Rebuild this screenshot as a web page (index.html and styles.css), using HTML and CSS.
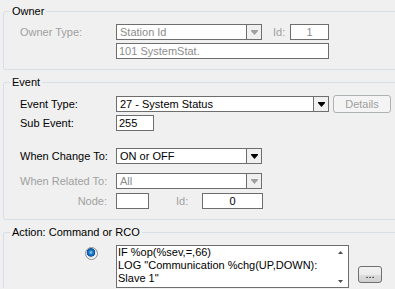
FILE: index.html
```html
<!DOCTYPE html>
<html lang="en">

<head>
   <meta charset="UTF-8">
   <meta name="viewport" content="width=device-width, initial-scale=1.0">
   <title>Event Action</title>
   <link rel="stylesheet" href="styles.css">
</head>

<body>

   <fieldset class="group">
       <legend>Owner</legend>
       <div class="row">
           <span class="label disabled">Owner Type:</span>
           <div class="combo combo-short is-disabled">
               <span class="combo-text">Station Id</span>
               <span class="combo-btn"><svg width="7" height="5" viewBox="0 0 7 5"><path d="M0 0h7v1H0zM0 1h7L3.5 5z"/></svg></span>
           </div>
           <span class="id-label disabled">Id:</span>
           <div class="field field-id is-disabled">1</div>
       </div>
       <div class="row gap-3">
           <span class="label"></span>
           <div class="field field-wide is-disabled">101 SystemStat.</div>
       </div>
   </fieldset>

   <fieldset class="group">
       <legend>Event</legend>
       <div class="row row-tall">
           <span class="label">Event Type:</span>
           <div class="combo combo-wide">
               <span class="combo-text">27 - System Status</span>
               <span class="combo-btn"><svg width="7" height="5" viewBox="0 0 7 5"><path d="M0 0h7v1H0zM0 1h7L3.5 5z"/></svg></span>
           </div>
           <button type="button" class="details-button" disabled>Details</button>
       </div>
       <div class="row gap-2">
           <span class="label">Sub Event:</span>
           <div class="field field-sub">255</div>
       </div>
       <div class="row gap-17">
           <span class="label">When Change To:</span>
           <div class="combo combo-short">
               <span class="combo-text">ON or OFF</span>
               <span class="combo-btn"><svg width="7" height="5" viewBox="0 0 7 5"><path d="M0 0h7v1H0zM0 1h7L3.5 5z"/></svg></span>
           </div>
       </div>
       <div class="row gap-9">
           <span class="label disabled">When Related To:</span>
           <div class="combo combo-short is-disabled">
               <span class="combo-text">All</span>
               <span class="combo-btn"><svg width="7" height="5" viewBox="0 0 7 5"><path d="M0 0h7v1H0zM0 1h7L3.5 5z"/></svg></span>
           </div>
       </div>
       <div class="row gap-4">
           <span class="label label-right disabled">Node:</span>
           <div class="field field-node"></div>
           <span class="node-id-label disabled">Id:</span>
           <div class="field field-node-id">0</div>
       </div>
   </fieldset>

   <fieldset class="group group-last">
       <legend>Action: Command or RCO</legend>
       <div class="action-row">
           <span class="radio-cell"><span class="radio"></span></span>
           <div class="script-box">
               <div class="script-text">IF %op(%sev,=,66)<br>LOG "Communication %chg(UP,DOWN):<br>Slave 1"</div>
               <div class="scroll">
                   <svg width="5" height="3" viewBox="0 0 5 3"><path d="M2.5 0L5 3H0z"/></svg>
                   <svg width="5" height="3" viewBox="0 0 5 3"><path d="M0 0h5L2.5 3z"/></svg>
               </div>
           </div>
           <button type="button" class="more-button">...</button>
       </div>
   </fieldset>

</body>

</html>
```

FILE: styles.css
```css
body {
    font-family: "Liberation Sans", Arial, sans-serif;
    font-size: 11px;
    margin: 0;
    background-color: #F0F0F0;
    color: #000;
    overflow: hidden;
    height: 289px;
}

.group {
    margin: 5px -12px 0 3px;
    padding: 6px 0 10px 6px;
    border: 1px solid #D5DFE5;
    border-radius: 3px;
    min-width: 0;
}

.group:first-child {
    margin-top: 4px;
}

/* runs off the bottom of the window */
.group-last {
    padding-bottom: 0;
    border-bottom: 0;
    border-radius: 3px 3px 0 0;
}

legend {
    padding: 0 2px;
    line-height: 14px;
    height: 14px;
}

.row {
    display: flex;
    align-items: center;
    height: 16px;
    padding-left: 10px;
}

.row-tall {
    height: 18px;
}

.gap-2 { margin-top: 2px; }
.gap-3 { margin-top: 3px; }
.gap-4 { margin-top: 4px; }
.gap-9 { margin-top: 9px; }
.gap-17 { margin-top: 17px; }

.label {
    width: 96px;
    flex-shrink: 0;
}

.label-right {
    text-align: right;
    padding-right: 9px;
    width: 87px;
}

.disabled {
    color: #A0A0A0;
}

.field,
.combo {
    box-sizing: border-box;
    height: 16px;
    border: 1px solid #6E6E6E;
    background-color: #fff;
    line-height: 14px;
    flex-shrink: 0;
}

.field {
    padding-left: 2px;
}

.is-disabled {
    color: #8C8C8C;
}

.combo {
    display: flex;
}

.combo-text {
    flex-grow: 1;
    padding-left: 3px;
}

.combo-btn {
    width: 14px;
    border-left: 1px solid #6E6E6E;
    background-color: #F0F0F0;
    display: flex;
    align-items: center;
    justify-content: center;
}

.combo-btn svg {
    fill: #000;
}

.is-disabled .combo-btn svg {
    fill: #A0A0A0;
}

.combo-short { width: 146px; }
.combo-wide { width: 213px; }

.field-wide { width: 213px; }
.field-sub { width: 38px; }
.field-node { width: 33px; }

.field-id,
.field-node-id {
    text-align: center;
    padding-left: 0;
}

.field-id { width: 39px; }
.field-node-id { width: 61px; }

.id-label {
    margin-left: 11px;
    width: 17px;
}

.node-id-label {
    margin-left: 27px;
    width: 26px;
}

.details-button {
    margin-left: 4px;
    width: 58px;
    height: 18px;
    padding: 0;
    font: inherit;
    color: #A0A0A0;
    background-color: #F4F4F4;
    border: 1px solid #ADB2B5;
    border-radius: 3px;
}

.action-row {
    display: flex;
    align-items: flex-start;
    padding-left: 10px;
}

.radio-cell {
    width: 96px;
    flex-shrink: 0;
    padding-top: 2px;
}

.radio {
    display: block;
    box-sizing: border-box;
    width: 13px;
    height: 13px;
    margin-left: 65px;
    border: 1px solid #8E8F8F;
    border-radius: 50%;
    background: radial-gradient(circle at 45% 40%, #9FD8F8 0, #1E7FD0 2px, #0B4F98 4px, #DDE4EA 4.5px, #F4F4F4 6px);
}

.script-box {
    box-sizing: border-box;
    width: 233px;
    height: 43px;
    border: 1px solid #6E6E6E;
    background-color: #fff;
    display: flex;
}

.script-text {
    flex-grow: 1;
    padding-left: 1px;
    line-height: 13px;
    white-space: nowrap;
    overflow: hidden;
}

.scroll {
    width: 15px;
    display: flex;
    flex-direction: column;
    justify-content: space-between;
    align-items: center;
    padding: 5px 0 4px;
}

.scroll svg {
    fill: #4D4D4D;
}

.more-button {
    margin: 21px 0 0 9px;
    width: 24px;
    height: 17px;
    padding: 0 0 2px;
    font: inherit;
    line-height: 10px;
    border: 1px solid #707070;
    border-radius: 3px;
    background: linear-gradient(#F2F2F2, #EBEBEB 50%, #DDDDDD 51%, #CFCFCF);
}
```
